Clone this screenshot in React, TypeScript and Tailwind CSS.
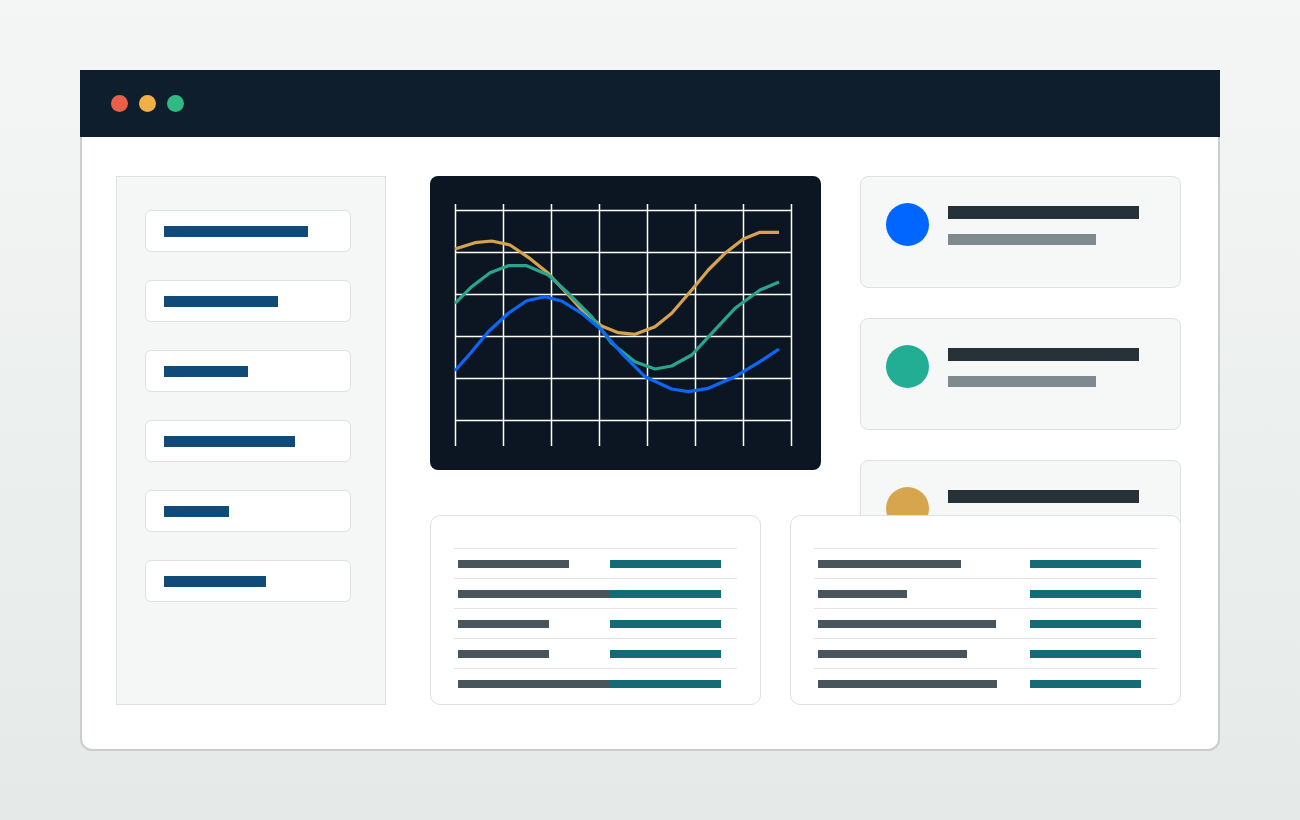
import React from "react";

const navWidths = [144, 114, 84, 131, 65, 102];

const orange: [number, number][] = [
  [455, 249], [475, 242.7], [491.7, 241], [510, 245], [528.3, 257.3], [548.3, 273.3],
  [568.3, 295], [585, 313.3], [601.7, 326], [618.3, 332.7], [635, 334.3], [655, 326.7],
  [671.7, 313.3], [691.7, 290], [708.3, 270], [725, 253.3], [743.3, 239], [760, 232.3], [779, 232.3],
];
const green: [number, number][] = [
  [455, 303.3], [471.7, 286.7], [490, 272.7], [508.3, 265.7], [526.7, 265.7], [548.3, 275],
  [568.3, 293.3], [591.7, 316.7], [611.7, 343.3], [635, 361.7], [655, 369], [671.7, 366],
  [691.7, 355], [711.7, 333.3], [735, 308.3], [760, 290], [779, 282],
];
const blue: [number, number][] = [
  [455, 370.7], [471.7, 351.7], [488.3, 331.7], [508.3, 313.3], [526.7, 300.7], [545, 296.7],
  [561.7, 301], [581.7, 313.3], [601.7, 330], [621.7, 353.3], [645, 376.7], [671.7, 389],
  [688.3, 391.7], [708.3, 388.3], [735, 376.7], [758.3, 362.7], [779, 349],
];

const pts = (p: [number, number][]) => p.map(([x, y]) => `${x},${y}`).join(" ");

function Chart() {
  const vx = [0, 1, 2, 3, 4, 5, 6, 7].map((k) => 455.5 + 48 * k);
  const hy = [0, 1, 2, 3, 4, 5].map((k) => 210.5 + 42 * k);
  return (
    <div className="w-[391px] h-[294px] shrink-0 rounded-[8px] bg-[#0b1622] overflow-hidden">
      <svg width="391" height="294" viewBox="430 176 391 294">
        {vx.map((x) => (
          <line key={"v" + x} x1={x} y1={204} x2={x} y2={446} stroke="#ffffff" strokeWidth={1.5} />
        ))}
        {hy.map((y) => (
          <line key={"h" + y} x1={455} y1={y} x2={792} y2={y} stroke="#ffffff" strokeWidth={1.5} />
        ))}
        <polyline points={pts(orange)} fill="none" stroke="#d6a24e" strokeWidth={3.2} strokeLinejoin="round" />
        <polyline points={pts(green)} fill="none" stroke="#2aa58c" strokeWidth={3.2} strokeLinejoin="round" />
        <polyline points={pts(blue)} fill="none" stroke="#0b68f6" strokeWidth={3.2} strokeLinejoin="round" />
      </svg>
    </div>
  );
}

function InfoCard({ color }: { color: string }) {
  return (
    <div className="w-[321px] h-[112px] rounded-[8px] border border-[#dde2e1] bg-[#f6f8f8] flex items-start pl-[25px] pt-[26px]">
      <div className="w-[43px] h-[43px] rounded-full shrink-0" style={{ backgroundColor: color }} />
      <div className="ml-[19px] flex flex-col">
        <div className="mt-[3px] h-[13px] w-[191px] bg-[#263238]" />
        <div className="mt-[15px] h-[11px] w-[148px] bg-[#7f8a8f]" />
      </div>
    </div>
  );
}

function Table({ width, leftCell, rows }: { width: number; leftCell: number; rows: number[] }) {
  return (
    <div
      className="h-[190px] rounded-[10px] border border-[#dde2e1] bg-white pt-[32px] px-[23px] pb-[6px]"
      style={{ width }}
    >
      {rows.map((w, i) => (
        <div key={i} className="h-[30px] border-t border-[#e2e6e6] flex items-start pt-[11px] pl-[4px]">
          <div className="shrink-0" style={{ width: leftCell }}>
            <div className="h-[8px] bg-[#48555c]" style={{ width: w }} />
          </div>
          <div className="h-[8px] w-[111px] bg-[#146b76]" />
        </div>
      ))}
    </div>
  );
}

export default function App() {
  return (
    <div className="w-full h-[820px] bg-gradient-to-b from-[#f4f6f5] to-[#e5eae8] flex justify-center pt-[70px]">
      <div className="w-[1140px] h-[681px] flex flex-col">
        <div className="h-[67px] bg-[#0f1e2d] flex items-center pl-[31px] gap-[11px] shrink-0">
          <div className="w-[17px] h-[17px] rounded-full bg-[#e8604a]" />
          <div className="w-[17px] h-[17px] rounded-full bg-[#f0b046]" />
          <div className="w-[17px] h-[17px] rounded-full bg-[#2fba82]" />
        </div>
        <div className="flex-1 bg-white border-x-2 border-b-2 border-[#c9cfce] rounded-b-[12px] flex pt-[39px] pl-[34px]">
          <div className="w-[270px] h-[529px] shrink-0 bg-[#f5f7f7] border border-[#dde2e1] pl-[28px] pt-[33px] flex flex-col gap-[28px]">
            {navWidths.map((w, i) => (
              <div
                key={i}
                className="w-[206px] h-[42px] rounded-[6px] border border-[#dde2e1] bg-white flex items-center pl-[18px]"
              >
                <div className="h-[11px] bg-[#0f4a78]" style={{ width: w }} />
              </div>
            ))}
          </div>
          <div className="ml-[44px] flex flex-col">
            <div className="flex items-start">
              <Chart />
              <div className="ml-[39px] flex flex-col gap-[30px]">
                <InfoCard color="#0066ff" />
                <InfoCard color="#22ae94" />
                <InfoCard color="#d6a54d" />
              </div>
            </div>
            <div className="relative z-10 mt-[-57px] flex gap-[29px]">
              <Table width={331} leftCell={152} rows={[111, 152, 91, 91, 152]} />
              <Table width={391} leftCell={212} rows={[143, 89, 178, 149, 179]} />
            </div>
          </div>
        </div>
      </div>
    </div>
  );
}
